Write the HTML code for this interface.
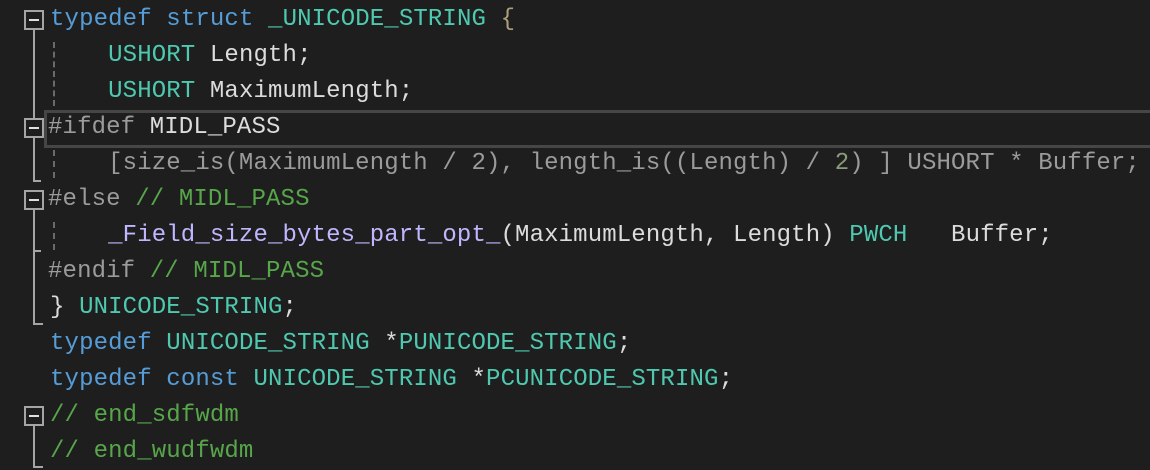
<!DOCTYPE html>
<html><head><style>
body{margin:0;width:1150px;height:470px;background:#1e1e1e;overflow:hidden;position:relative;font-family:"Liberation Mono",monospace;font-size:24px;}
.l{position:absolute;left:50px;height:36px;line-height:36px;white-space:pre;color:#dcdcdc;letter-spacing:0.13px;}
.k{color:#569cd6}.t{color:#4ec9b0}.p{color:#9b9b9b}.c{color:#57a64a}.m{color:#beb7ff}.g{color:#9b9b9b}.n{color:#8a9a7a}
.box{position:absolute;left:24px;width:16px;height:16px;border:2px solid #a5a5a5;}
.box:after{content:"";position:absolute;left:3px;top:7px;width:10px;height:2px;background:#e0e0e0;}
.v{position:absolute;left:33px;width:2px;background:#a5a5a5;}
.h{position:absolute;left:33px;width:10px;height:2px;background:#a5a5a5;}
.d{position:absolute;left:53px;width:0;border-left:2px dashed #6a6a6a;}
</style></head><body>
<div style="position:absolute;left:44px;top:110px;width:1110px;height:32px;border:3px solid #464646;"></div>
<div class="l" style="top:2px"><span class="k">typedef</span> <span class="k">struct</span> <span class="t">_UNICODE_STRING</span> <span style="color:#ad9f7b">{</span></div>
<div class="l" style="top:38px">    <span class="t">USHORT</span> Length;</div>
<div class="l" style="top:74px">    <span class="t">USHORT</span> MaximumLength;</div>
<div class="l" style="top:110px;left:48px"><span class="p">#ifdef</span> MIDL_PASS</div>
<div class="l g" style="top:146px">    [size_is(MaximumLength / 2), length_is((Length) / <span class="n">2</span>) ] USHORT * Buffer;</div>
<div class="l" style="top:182px;left:48px"><span class="p">#else</span> <span class="c">// MIDL_PASS</span></div>
<div class="l" style="top:218px">    <span class="m">_Field_size_bytes_part_opt_</span>(MaximumLength, Length) <span class="t">PWCH</span>   Buffer;</div>
<div class="l" style="top:254px;left:48px"><span class="p">#endif</span> <span class="c">// MIDL_PASS</span></div>
<div class="l" style="top:290px">} <span class="t">UNICODE_STRING</span>;</div>
<div class="l" style="top:326px"><span class="k">typedef</span> <span class="t">UNICODE_STRING</span> *<span class="t">PUNICODE_STRING</span>;</div>
<div class="l" style="top:362px"><span class="k">typedef</span> <span class="k">const</span> <span class="t">UNICODE_STRING</span> *<span class="t">PCUNICODE_STRING</span>;</div>
<div class="l" style="top:398px"><span class="c">// end_sdfwdm</span></div>
<div class="l" style="top:434px"><span class="c">// end_wudfwdm</span></div>

<div class="box" style="top:10px"></div>
<div class="v" style="top:30px;height:88px"></div>
<div class="box" style="top:118px"></div>
<div class="v" style="top:138px;height:44px"></div>
<div class="h" style="top:180px;width:8px"></div>
<div class="box" style="top:190px"></div>
<div class="v" style="top:210px;height:115px"></div>
<div class="h" style="top:250px;width:8px"></div>
<div class="h" style="top:323px"></div>
<div class="box" style="top:406px"></div>
<div class="v" style="top:426px;height:42px"></div>
<div class="h" style="top:466px"></div>

<div class="d" style="top:42px;height:64px"></div>
<div class="d" style="top:150px;height:28px"></div>
<div class="d" style="top:222px;height:28px"></div>
</body></html>
